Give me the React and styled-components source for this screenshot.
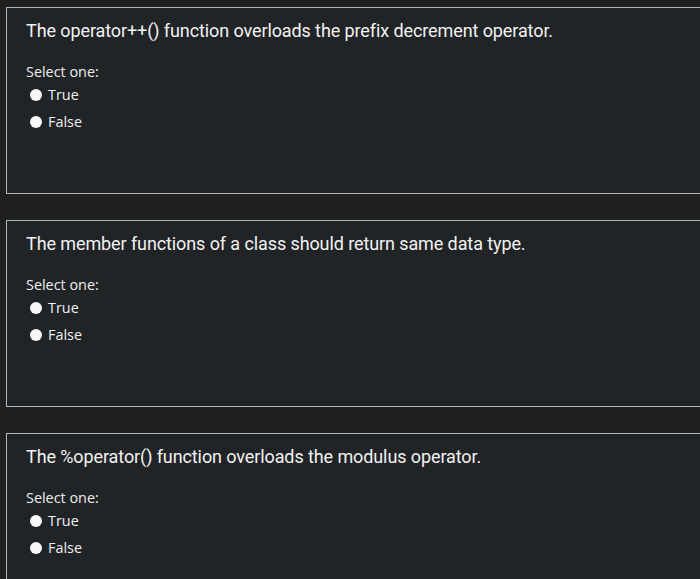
import React from "react";
import styled, { createGlobalStyle } from "styled-components";

const Global = createGlobalStyle`
  html, body {
    margin: 0;
    padding: 0;
    background: #1e2022;
    overflow: hidden;
  }
`;

const Page = styled.div`
  display: flex;
  flex-direction: column;
  gap: 26px;
  padding: 7px 0 0 6px;
  width: 740px;
`;

const Card = styled.section`
  box-sizing: border-box;
  height: 187px;
  border: 1px solid #b4b5ae;
  background: #212426;
  padding: 11px 19px 0 19px;
`;

const Title = styled.h2`
  margin: 0;
  font-family: Roboto, "Liberation Sans", sans-serif;
  font-weight: 400;
  font-size: 18px;
  line-height: 24px;
  color: #f2f2f2;
  letter-spacing: -0.1px;
`;

const Prompt = styled.div`
  margin-top: 19px;
  font-family: "Open Sans", "Liberation Sans", sans-serif;
  font-size: 14.4px;
  line-height: 20px;
  color: #eeeeee;
`;

const Options = styled.div`
  display: flex;
  flex-direction: column;
  gap: 7px;
  margin-top: 3px;
  padding-left: 4px;
`;

const Option = styled.label`
  display: flex;
  align-items: center;
  gap: 6px;
  font-family: "Open Sans", "Liberation Sans", sans-serif;
  font-size: 14.4px;
  line-height: 20px;
  color: #f0f0f0;
`;

const Dot = styled.span`
  width: 12px;
  height: 12px;
  border-radius: 50%;
  background: #f7f7f7;
  flex: none;
`;

const questions = [
  "The operator++() function overloads the prefix decrement operator.",
  "The member functions of a class should return same data type.",
  "The %operator() function overloads the modulus operator.",
];

export default function App() {
  return (
    <>
      <Global />
      <Page>
        {questions.map((q) => (
          <Card key={q}>
            <Title>{q}</Title>
            <Prompt>Select one:</Prompt>
            <Options>
              <Option>
                <Dot />
                True
              </Option>
              <Option>
                <Dot />
                False
              </Option>
            </Options>
          </Card>
        ))}
      </Page>
    </>
  );
}
